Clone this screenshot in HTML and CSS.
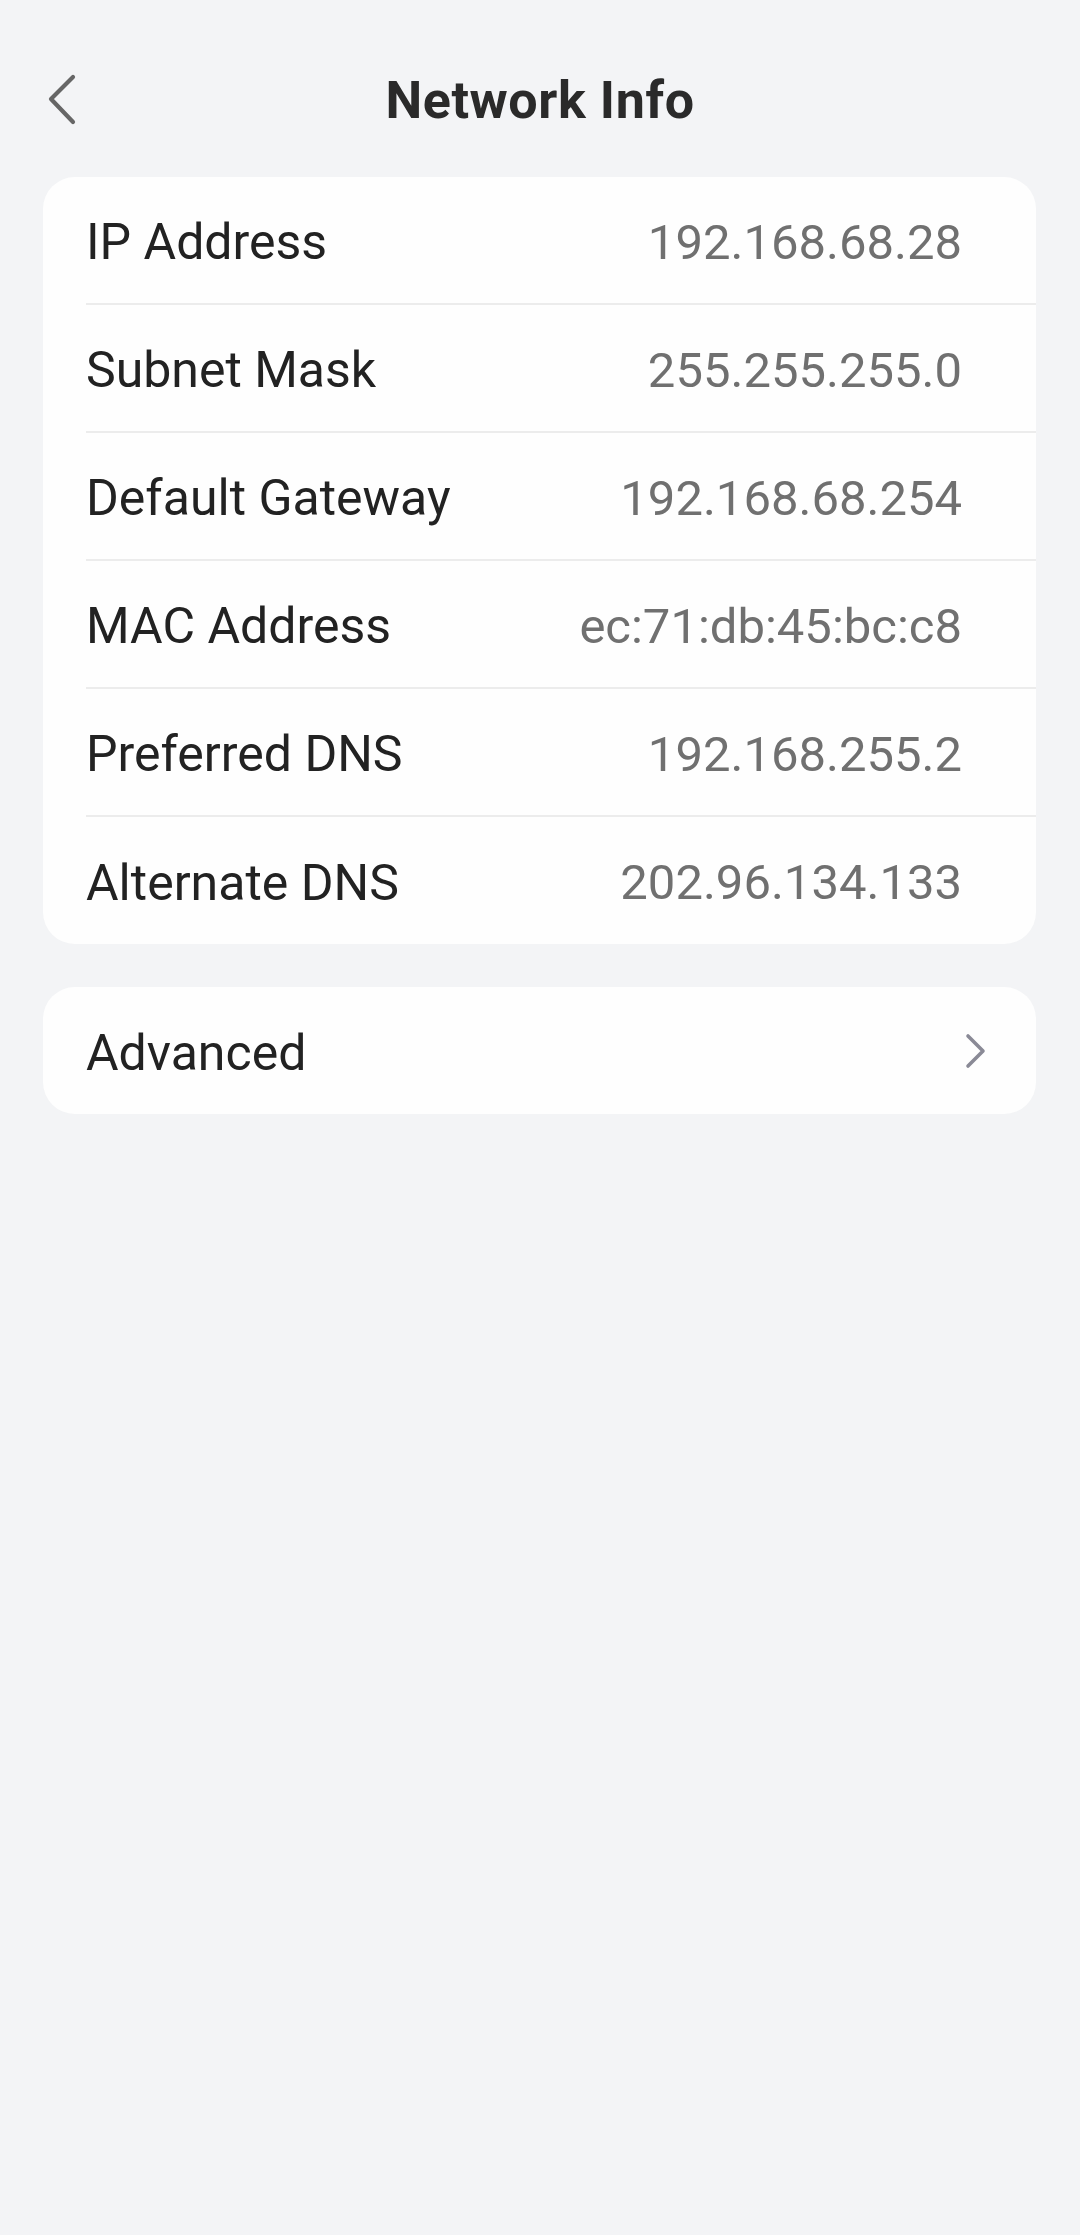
FILE: index.html
```html
<!DOCTYPE html>
<html lang="en">
<head>
    <meta charset="UTF-8">
    <meta name="viewport" content="width=device-width, initial-scale=1.0">
    <title>Network Info</title>
    <link rel="stylesheet" href="styles.css">
</head>
<body>
    <header class="header">
        <button class="back-btn" aria-label="Back">
            <svg viewBox="0 0 32 52" width="32" height="52" fill="none" stroke="currentColor" stroke-width="4.2" stroke-linecap="round" stroke-linejoin="round">
                <polyline points="27,3 5,25 27,48"></polyline>
            </svg>
        </button>
        <h1 class="title">Network Info</h1>
        <span></span>
    </header>

    <section class="card">
        <div class="info-row">
            <span class="label">IP Address</span>
            <span class="value">192.168.68.28</span>
        </div>
        <div class="info-row">
            <span class="label">Subnet Mask</span>
            <span class="value">255.255.255.0</span>
        </div>
        <div class="info-row">
            <span class="label">Default Gateway</span>
            <span class="value">192.168.68.254</span>
        </div>
        <div class="info-row">
            <span class="label">MAC Address</span>
            <span class="value">ec:71:db:45:bc:c8</span>
        </div>
        <div class="info-row">
            <span class="label">Preferred DNS</span>
            <span class="value">192.168.255.2</span>
        </div>
        <div class="info-row">
            <span class="label">Alternate DNS</span>
            <span class="value">202.96.134.133</span>
        </div>
    </section>

    <section class="card">
        <div class="link-row">
            <span class="label">Advanced</span>
            <svg class="chevron" viewBox="0 0 22 36" width="22" height="36" fill="none" stroke="currentColor" stroke-width="3.6" stroke-linecap="round" stroke-linejoin="round">
                <polyline points="3,3 18,18 3,33"></polyline>
            </svg>
        </div>
    </section>
</body>
</html>
```

FILE: styles.css
```css
* {
    margin: 0;
    padding: 0;
    box-sizing: border-box;
    font-family: Roboto, "Noto Sans", sans-serif;
}

body {
    min-height: 100vh;
    background: #f3f4f6;
    color: #222222;
}

.header {
    display: grid;
    grid-template-columns: 1fr auto 1fr;
    align-items: center;
    height: 120px;
    margin-top: 40px;
    margin-bottom: 17px;
    padding-left: 46px;
}

.back-btn {
    display: flex;
    width: 32px;
    height: 52px;
    border: none;
    background: none;
    color: #666666;
    cursor: pointer;
}

.title {
    font-size: 52px;
    font-weight: 700;
    letter-spacing: 0.6px;
    color: #2a2a2a;
    margin-right: 46px;
}

.card {
    margin: 0 44px 43px 43px;
    background: #fefefe;
    border-radius: 32px;
    overflow: hidden;
}

.info-row {
    display: flex;
    justify-content: space-between;
    align-items: center;
    height: 128px;
    margin-left: 43px;
    padding-top: 4px;
    padding-right: 74px;
    border-bottom: 2px solid #ececec;
}

.info-row:last-child {
    border-bottom: none;
    height: 127px;
}

.label {
    font-size: 50px;
    color: #222222;
}

.value {
    font-size: 49px;
    color: #707070;
}

.link-row {
    display: flex;
    justify-content: space-between;
    align-items: center;
    height: 127px;
    padding-left: 43px;
    padding-right: 49px;
}

.link-row .label {
    padding-top: 4px;
}

.chevron {
    color: #8a8a96;
}
```
